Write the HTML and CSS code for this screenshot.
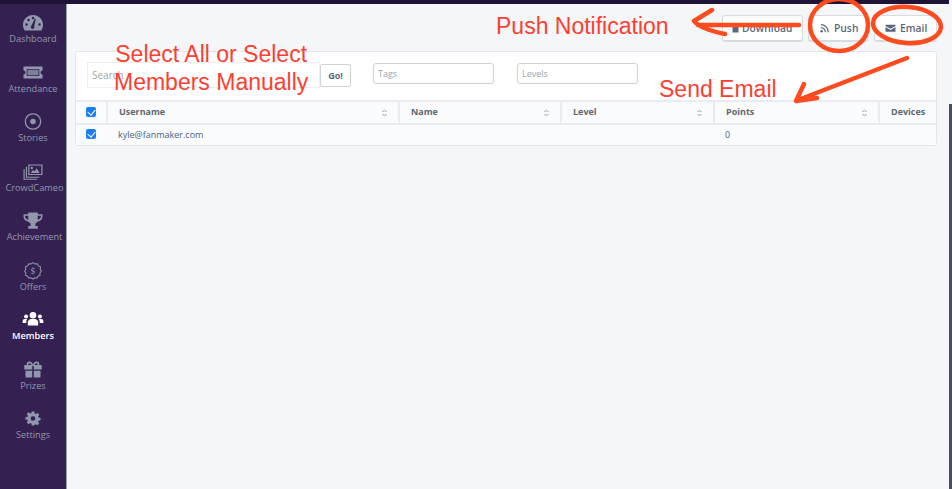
FILE: index.html
```html
<!doctype html>
<html lang="en">
  <head>
    <meta charset="UTF-8" />
    <meta name="viewport" content="width=device-width, initial-scale=1.0" />
    <title>Members</title>
    <link rel="stylesheet" href="styles.css">
  </head>
  <body>
    <div class="page">
      <div class="topline"></div>
      <div class="app">
        <div class="sidebar">
          <a class="nav" href="#">
            <svg viewBox="0 1 24 20" class="navicon"><path fill-rule="evenodd" d="M12 2C5.400 2 0 7.200 0 13.800c0 2.500.7 4.700 1.900 6.700h20.200c1.200-2 1.900-4.200 1.900-6.700C24 7.200 18.600 2 12 2zM4.200 15a1.500 1.500 0 1 1 0-3 1.500 1.500 0 0 1 0 3zM6.700 9.500a1.500 1.500 0 1 1 0-3 1.500 1.500 0 0 1 0 3zM12 7a1.500 1.500 0 1 1 0-3 1.500 1.500 0 0 1 0 3zM19.800 15a1.500 1.500 0 1 1 0-3 1.500 1.500 0 0 1 0 3zM13.700 16a2.200 2.200 0 1 1-3.500-1.300L14 6.500l1.300.4-1.800 8.300c.1.300.2.500.2.800z"/></svg>
            Dashboard
          </a>
          <a class="nav" href="#">
            <svg viewBox="0 0 24 24" class="navicon"><path fill-rule="evenodd" d="M0 4.500h24v5a2.500 2.500 0 0 0 0 5v5H0v-5a2.500 2.500 0 0 0 0-5v-5zm4 3v9h16v-9H4z"/><rect x="5" y="8.500" width="14" height="7" opacity=".8"/></svg>
            Attendance
          </a>
          <a class="nav" href="#">
            <svg viewBox="0 0 24 24" class="navicon"><path fill-rule="evenodd" d="M12 1.500a10.500 10.500 0 1 1 0 21 10.500 10.500 0 0 1 0-21zm0 1.600a8.900 8.900 0 1 0 0 17.800 8.900 8.900 0 0 0 0-17.800z"/><circle cx="12" cy="12" r="3.500"/></svg>
            Stories
          </a>
          <a class="nav nav-wide" href="#">
            <svg viewBox="0 0 24 24" class="navicon"><path fill-rule="evenodd" d="M6 3h18v13.500H6V3zm1.500 1.500V15h15V4.500h-15zM9 14l3-4 2 2 2.500-4 4 6H9zM10.500 6a1.500 1.500 0 1 1 0 3 1.500 1.500 0 0 1 0-3z"/><path d="M4.500 6v12.500H20V20H3V6h1.500z"/><path d="M1.500 9v12H17v1.500H0V9h1.500z"/></svg>
            CrowdCameo
          </a>
          <a class="nav nav-wide" href="#">
            <svg viewBox="0 0 24 24" class="navicon"><path fill-rule="evenodd" d="M6 2h12v2h6v3c0 3.500-2.700 6-6.300 6.500-.8 1.100-1.700 1.800-2.700 2.200V19h3v3.500H6v-3.500h3v-3.300c-1-.4-1.900-1.100-2.700-2.200C2.700 13 0 10.500 0 7V4h6V2zM2 6v1c0 2 1.500 3.500 4.300 4.200C6 9.700 6 8 6 6H2zm16 0c0 2 0 3.700-.3 5.200C20.500 10.500 22 9 22 7V6h-4z"/></svg>
            Achievement
          </a>
          <a class="nav" href="#">
            <svg viewBox="0 0 24 24" class="navicon"><path fill="none" stroke="currentColor" stroke-width="1.300" d="M12 2l2.500 1.800 3-.4 1.200 2.800 2.800 1.200-.4 3L22.500 13l-1.900 2.300.4 2.700-2.800 1.200-1.200 2.300-3-.2L12 23l-2.500-1.700-3 .2-1.200-2.300-2.800-1.200.4-2.700L1.500 13l1.400-2.600-.4-3 2.800-1.200 1.200-2.800 3 .4z"/><text x="12" y="17" text-anchor="middle" class="dollar">$</text></svg>
            Offers
          </a>
          <a class="nav active" href="#">
            <svg viewBox="1 1 22 22" class="navicon"><circle cx="12" cy="7" r="3.800"/><circle cx="4" cy="8.500" r="2.300"/><circle cx="20" cy="8.500" r="2.300"/><path d="M6 19v-3.500c0-2.500 2-4 4-4h4c2 0 4 1.500 4 4V19H6z"/><path d="M0 16v-2c0-1.500 1-2.500 2.500-2.500h2.800C4.500 12.500 4.200 14 4.200 16H0zM24 16v-2c0-1.500-1-2.500-2.500-2.500h-2.800c.8 1 1.100 2.500 1.100 4.500H24z"/></svg>
            Members
          </a>
          <a class="nav" href="#">
            <svg viewBox="0 0 24 24" class="navicon"><path fill-rule="evenodd" d="M7.500 2c2 0 3.500 1.500 4.500 4 1-2.500 2.500-4 4.500-4C19 2 20 3.500 20 4.800c0 .5-.1 1-.4 1.500H23V12H13V7.500h-2V12H1V6.300h3.400C4.100 5.800 4 5.300 4 4.800 4 3.500 5 2 7.500 2zm0 2C6.500 4 6 4.400 6 5s.6 1.300 1.500 1.300h2.700C9.500 5 8.600 4 7.500 4zm9 0c-1.100 0-2 1-2.700 2.300h2.700C17.400 6.300 18 5.600 18 5s-.5-1-1.500-1z"/><path d="M2.500 13.500H11V22H2.500zM13 13.500h8.500V22H13z"/></svg>
            Prizes
          </a>
          <a class="nav" href="#">
            <svg viewBox="-3 -3 30 30" class="navicon"><path fill-rule="evenodd" d="M10 1h4l.6 3.200 1.800.8 2.700-1.800 2.800 2.800-1.800 2.700.7 1.800 3.200.6v3.800l-3.200.6-.7 1.800 1.800 2.700-2.800 2.800-2.700-1.800-1.800.7L14 23h-4l-.6-3.200-1.800-.7-2.700 1.800-2.800-2.800 1.800-2.700-.7-1.800L0 13.900v-3.800l3.200-.6.7-1.800-1.800-2.700 2.800-2.800 2.700 1.800 1.800-.8L10 1zm2 7.300a3.700 3.700 0 1 0 0 7.400 3.700 3.700 0 0 0 0-7.400z"/></svg>
            Settings
          </a>
        </div>

        <div class="content">
          <div class="actions">
            <a class="btn btn-download" href="#">
              <svg viewBox="0 0 12 12" class="btnicon"><path d="M2 0h5l3 3v9H2z"/></svg>
              Download
            </a>
            <a class="btn btn-push" href="#">
              <svg viewBox="0 0 12 12" class="btnicon"><circle cx="2" cy="10" r="1.500"/><path fill="none" stroke="currentColor" stroke-width="1.500" d="M1 5.500A5.500 5.500 0 0 1 6.500 11M1 2a9 9 0 0 1 9 9"/></svg>
              Push
            </a>
            <a class="btn btn-email" href="#">
              <svg viewBox="0 0 12 12" class="btnicon mail"><path d="M0 2h12v1.500L6 7 0 3.500z"/><path d="M0 4.800l6 3.500 6-3.500V10.500H0z"/></svg>
              Email
            </a>
          </div>

          <div class="card">
            <div class="filters">
              <div class="searchgroup">
                <input type="text" class="search" placeholder="Search" />
                <input type="button" value="Go!" class="go" />
              </div>
              <input type="text" class="filter" placeholder="Tags" />
              <input type="text" class="filter" placeholder="Levels" />
            </div>
            <table class="members">
              <tr>
                <th class="c-check"><span class="check"></span></th>
                <th class="c-user">Username<span class="sort"></span></th>
                <th class="c-name">Name<span class="sort"></span></th>
                <th class="c-level">Level<span class="sort"></span></th>
                <th class="c-points">Points<span class="sort"></span></th>
                <th class="c-devices">Devices</th>
              </tr>
              <tr>
                <td class="c-check"><span class="check"></span></td>
                <td><a href="#">kyle@fanmaker.com</a></td>
                <td></td>
                <td></td>
                <td>0</td>
                <td></td>
              </tr>
            </table>
          </div>
        </div>
      </div>
    </div>
    <div class="edge"></div>

    <!-- notes drawn over the screenshot -->
    <div class="note note-select">Select All or Select<br />Members Manually</div>
    <div class="note note-push">Push Notification</div>
    <div class="note note-email">Send Email</div>
    <svg class="marks" viewBox="0 0 952 489">
      <path d="M799 25H698M712 10L694 21Q700 29 725 34" />
      <ellipse cx="839" cy="25" rx="29" ry="26" />
      <ellipse cx="907" cy="25" rx="34" ry="18" transform="rotate(4 907 25)" />
      <path d="M907 58L798 100M804 84L796 101L817 98" />
    </svg>
  </body>
</html>
```

FILE: styles.css
```css
* {
  padding: 0;
  margin: 0;
  box-sizing: border-box;
}
html,
body {
  height: 100%;
  overflow: hidden;
}
body {
  background-color: #f5f6f8;
  font-family: "Open Sans", "Liberation Sans", sans-serif;
  color: #4f5d73;
  display: flex;
}
a {
  text-decoration: none;
  color: inherit;
}
.page {
  flex: 1;
  display: flex;
  flex-direction: column;
}
.edge {
  width: 3px;
  flex: none;
  margin-top: 104px;
  background-color: #44505f;
}
.topline {
  height: 4px;
  background-color: #1f1437;
  flex: none;
}
.app {
  flex: 1;
  display: flex;
}
.sidebar {
  width: 67px;
  flex: none;
  background-color: #352052;
  border-right: 1px solid #98a3b0;
  padding-top: 9px;
  display: flex;
  flex-direction: column;
}
.nav {
  height: 49.5px;
  flex: none;
  display: flex;
  flex-direction: column;
  align-items: center;
  font-size: 9.2px;
  line-height: 12px;
  color: #9098ad;
  white-space: nowrap;
}
.nav.nav-wide {
  padding-left: 3px;
}
.nav.active {
  color: #fff;
  font-weight: 600;
}
.navicon {
  width: 20px;
  height: 19px;
  margin-bottom: 1px;
  fill: currentColor;
  overflow: visible;
}
.nav-wide .navicon {
  margin-left: -3px;
}
.dollar {
  font-size: 11px;
  fill: currentColor;
}
.content {
  flex: 1;
  padding: 11px 12px 0 8px;
}
.actions {
  display: flex;
  justify-content: flex-end;
  gap: 6px;
  height: 36px;
}
.btn {
  height: 26px;
  display: flex;
  align-items: center;
  gap: 4px;
  background-color: #fff;
  border: 1px solid #d8dbe0;
  border-radius: 3px;
  box-shadow: 0 1px 0 #d8dbe0;
  font-size: 10.300px;
  font-weight: 600;
  color: #5b6779;
}
.btn-download {
  width: 81px;
  margin-right: -1px;
  padding-left: 8px;
  gap: 2px;
}
.btn-download .btnicon {
  width: 9px;
}
.btn-push {
  width: 60px;
  padding-left: 11px;
}
.btn-email {
  width: 63px;
  padding-left: 10px;
}
.btnicon {
  width: 10px;
  height: 10px;
  fill: currentColor;
}
.btnicon.mail {
  width: 11px;
}
.card {
  background-color: #fff;
  border: 1px solid #e3e6ea;
  border-radius: 3px;
}
.filters {
  height: 48px;
  padding: 10px 11px 0;
  display: flex;
  align-items: flex-start;
  gap: 23px;
}
.filters input {
  font-family: inherit;
  outline: none;
}
.searchgroup {
  display: flex;
  margin-right: -1px;
}
.search {
  width: 233px;
  height: 26px;
  border: 1px solid #eceef0;
  padding: 0 4px;
  font-size: 10px;
}
.go {
  width: 31px;
  height: 23px;
  margin-top: 2px;
  background-color: #fff;
  border: 1px solid #cfd2d6;
  border-radius: 2px;
  font-size: 9px;
  font-weight: 700;
  color: #5b6779;
}
.filter {
  width: 121px;
  height: 21px;
  margin-top: 1px;
  border: 1px solid #cfd2d6;
  border-radius: 3px;
  padding: 0 4px;
  font-size: 9px;
}
.search::placeholder,
.filter::placeholder {
  color: #9da3ab;
}
.members {
  width: 100%;
  border-collapse: collapse;
  table-layout: fixed;
  background-color: #fafbfd;
  font-size: 9px;
}
.members th {
  height: 23px;
  position: relative;
  text-align: left;
  padding-left: 11px;
  padding-bottom: 2px;
  font-weight: 700;
  color: #5f6670;
  border-top: 2px solid #e9ebee;
  border-bottom: 2px solid #e9ebee;
  border-right: 2px solid #e9ebee;
}
.members th:last-child {
  border-right: 0;
}
.members td {
  height: 21px;
  padding-left: 11px;
  padding-bottom: 2px;
  color: #4a5f7f;
}
.members .c-check {
  width: 31px;
  padding-left: 10px;
}
.members .c-user {
  width: 292px;
}
.members .c-name {
  width: 162px;
}
.members .c-level {
  width: 153px;
}
.members .c-points {
  width: 165px;
}
.check {
  display: block;
  width: 10px;
  height: 10px;
  border-radius: 2px;
  background-color: #1a7ff0;
  position: relative;
}
.check::after {
  content: "";
  position: absolute;
  left: 3px;
  top: 1px;
  width: 4px;
  height: 6px;
  border: solid #fff;
  border-width: 0 1.500px 1.500px 0;
  transform: rotate(40deg);
}
.sort {
  position: absolute;
  right: 11px;
  top: 7px;
  width: 5px;
  height: 8px;
  background:
    linear-gradient(to top left, #c6c9ce 50%, transparent 50%) 0 0 / 50% 3px no-repeat,
    linear-gradient(to top right, #c6c9ce 50%, transparent 50%) 100% 0 / 50% 3px no-repeat,
    linear-gradient(to bottom left, #c6c9ce 50%, transparent 50%) 0 100% / 50% 3px no-repeat,
    linear-gradient(to bottom right, #c6c9ce 50%, transparent 50%) 100% 100% / 50% 3px no-repeat;
}
.note {
  position: absolute;
  font-family: "Liberation Sans", Arial, sans-serif;
  font-size: 23px;
  line-height: 28px;
  color: #fc3f32;
  white-space: nowrap;
}
.note-select {
  left: 114px;
  top: 40px;
  text-align: center;
}
.note-push {
  left: 496px;
  top: 12px;
}
.note-email {
  left: 659px;
  top: 75px;
}
.marks {
  position: absolute;
  left: 0;
  top: 0;
  width: 952px;
  height: 489px;
  fill: none;
  stroke: #fd4a1e;
  stroke-width: 4.500;
  stroke-linecap: round;
  stroke-linejoin: round;
}
```
